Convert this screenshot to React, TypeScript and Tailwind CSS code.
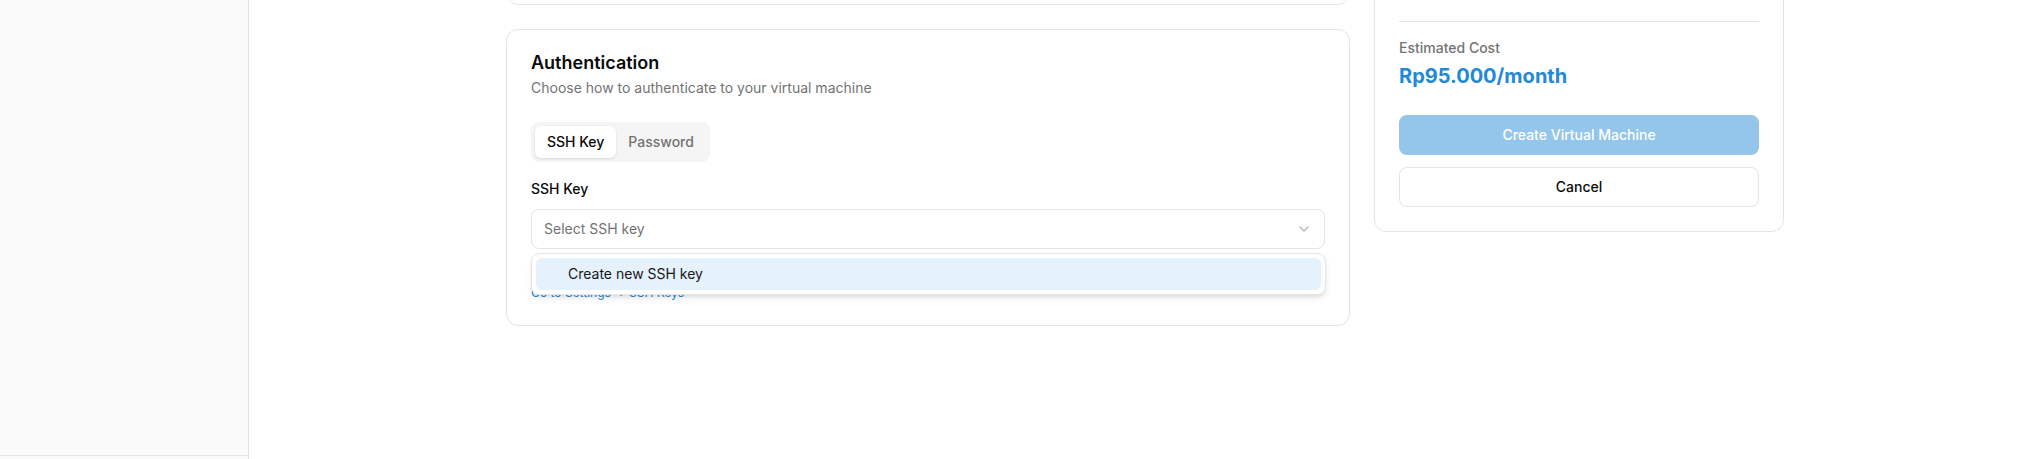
import { ChevronDown } from "lucide-react";

function Sidebar() {
  return (
    <aside className="flex h-[519px] w-[249px] shrink-0 flex-col border-r border-[#e5e5e5] bg-[#fafafa]">
      <div className="flex-1" />
      <div className="h-16 shrink-0 border-t border-[#e5e5e5]" />
    </aside>
  );
}

function AuthenticationCard() {
  return (
    <div className="rounded-xl border border-[#e5e5e5] bg-white p-6">
      <h3 className="text-lg font-semibold leading-none text-[#0a0a0a]">Authentication</h3>
      <p className="mt-1.5 text-sm text-[#737373]">Choose how to authenticate to your virtual machine</p>

      <div className="mt-6 inline-flex h-10 items-center rounded-lg bg-[#f5f5f5] p-1">
        <button className="h-8 rounded-md bg-white px-3 text-sm font-medium text-[#0a0a0a] shadow-sm">SSH Key</button>
        <button className="h-8 rounded-md px-3 text-sm font-medium text-[#737373]">Password</button>
      </div>

      <label className="mt-5 block text-sm font-medium leading-none text-[#0a0a0a]">SSH Key</label>
      <div className="relative mt-[13px]">
        <div className="flex h-10 w-full items-center justify-between rounded-lg border border-[#e5e5e5] bg-white px-3 text-sm text-[#737373]">
          <span>Select SSH key</span>
          <ChevronDown className="h-4 w-4 opacity-50" strokeWidth={2} />
        </div>
        <div className="absolute left-0 right-[-1px] top-full z-10 mt-1 rounded-lg border border-[#e5e5e5] bg-white p-1 shadow-md">
          <div className="flex h-8 items-center rounded-md bg-[#e5f1fb] pl-8 pr-2 text-sm text-[#171717]">
            Create new SSH key
          </div>
        </div>
      </div>
      {/* hint line sits under the open dropdown */}
      <div className="mt-2 h-5" />
      <a className="mt-2 block text-xs text-[#2189d6]">Go to Settings → SSH Keys</a>
    </div>
  );
}

function SummaryCard() {
  return (
    <div className="rounded-xl border border-[#e5e5e5] bg-white p-6">
      <div className="h-[196px]" />
      <div className="border-t border-[#e5e5e5] pt-4">
        <p className="text-sm font-medium text-[#737373]">Estimated Cost</p>
        <p className="mt-1 text-xl font-bold text-[#2189d6]">Rp95.000/month</p>
      </div>
      <button className="mt-[25px] h-10 w-full rounded-lg bg-[#2b8dd9] text-sm font-medium text-white opacity-50">
        Create Virtual Machine
      </button>
      <button className="mt-3 h-10 w-full rounded-lg border border-[#e5e5e5] bg-white text-sm font-medium text-[#0a0a0a]">
        Cancel
      </button>
    </div>
  );
}

export default function App() {
  return (
    <div className="flex h-[459px] w-full overflow-hidden bg-white font-['Inter','Noto_Sans',sans-serif]">
      <Sidebar />
      <main className="min-w-0 flex-1">
        <div className="ml-[257px] mt-[-200px] grid w-[1278px] grid-cols-3 items-start gap-6">
          <div className="col-span-2 flex flex-col gap-6">
            <div className="h-[205px] rounded-xl border border-[#e5e5e5] bg-white" />
            <AuthenticationCard />
          </div>
          <SummaryCard />
        </div>
      </main>
    </div>
  );
}
